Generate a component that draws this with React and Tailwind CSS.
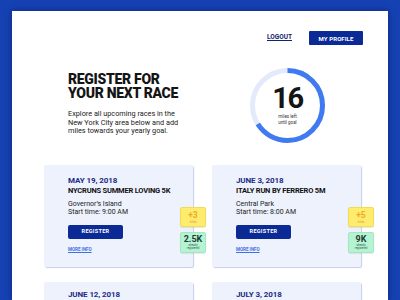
import React from "react";

const races = [
  { date: "MAY 19, 2018", title: "NYCRUNS SUMMER LOVING 5K", place: "Governor’s Island", time: "Start time: 9:00 AM", miles: "+3", reg: "2.5K" },
  { date: "JUNE 3, 2018", title: "ITALY RUN BY FERRERO 5M", place: "Central Park", time: "Start time: 8:00 AM", miles: "+5", reg: "9K" },
  { date: "JUNE 12, 2018", title: "NYRR RACE FOR RECOVERY 4M", place: "Central Park", time: "Start time: 8:00 AM", miles: "+4", reg: "5K" },
  { date: "JULY 3, 2018", title: "FOUR MILE FIREWORKS RUN", place: "Prospect Park", time: "Start time: 7:00 PM", miles: "+4", reg: "3K" },
];

function Card({ r, second }) {
  return (
    <div className={`relative h-[102px] rounded-[2px] bg-[#eef2fd] pl-[24px] shadow-[1px_1px_1px_rgba(160,175,220,0.6)] ${second ? "pt-[8px]" : "pt-[11px]"}`}>
      <div className="text-[8px] leading-[10px] font-bold text-[#1b2a86] tracking-[-0.1px]">{r.date}</div>
      <div className="text-[7.5px] leading-[10px] font-bold text-[#111] tracking-[-0.2px] whitespace-nowrap">{r.title}</div>
      <div className="mt-[3.5px] text-[7px] leading-[8px] text-[#222]">{r.place}</div>
      <div className="text-[7px] leading-[8px] text-[#222]">{r.time}</div>
      <div className="mt-[9px] flex h-[14px] w-[55px] items-center justify-center rounded-[2px] bg-[#0b2a96] text-[5.5px] font-bold tracking-[0.3px] text-white">
        REGISTER
      </div>
      <div className="mt-[8px] text-[4.5px] leading-[6px] font-bold text-[#3d6fe6] underline">MORE INFO</div>
      <div className="absolute left-[136px] top-[42px] flex h-[20px] w-[26px] flex-col items-center justify-center rounded-[2px] border border-[#f3dc4f] bg-[#fdec6e] shadow-[0_1px_1px_rgba(0,0,0,0.08)]">
        <div className="text-[8.5px] leading-[9px] font-bold text-[#f5a623]">{r.miles}</div>
        <div className="text-[3px] leading-[4px] text-[#e5a03a]">miles</div>
      </div>
      <div className="absolute left-[136px] top-[67px] flex h-[21px] w-[26px] flex-col items-center justify-center rounded-[2px] border border-[#9ee9c2] bg-[#b6f3d3] shadow-[0_1px_1px_rgba(0,0,0,0.08)]">
        <div className="text-[9px] leading-[9px] font-bold text-[#1f3d33]">{r.reg}</div>
        <div className="text-[2.8px] leading-[3px] text-[#2f5a4a] text-center">already<br />registered</div>
      </div>
    </div>
  );
}

export default function App() {
  const r = 35;
  const c = 2 * Math.PI * r;
  return (
    <div className="h-[300px] w-[400px] overflow-hidden bg-[#1541b3] pt-[11px]" style={{ fontFamily: "Roboto, 'Liberation Sans', sans-serif" }}>
      <div className="mx-[12px] h-[289px] overflow-hidden bg-white shadow-[0_0_6px_rgba(0,10,60,0.5)]">
        <div className="flex items-center justify-end gap-[17px] pr-[25px] pt-[20px]">
          <div className="text-[6.5px] font-bold text-[#13236e] underline">LOGOUT</div>
          <div className="flex h-[14px] w-[54px] items-center justify-center rounded-[1px] bg-[#0b2a96] text-[6px] font-bold tracking-[0.1px] text-white">
            MY PROFILE
          </div>
        </div>
        <div className="mt-[23px] flex">
          <div className="pl-[56px] pt-[4px]">
            <div className="text-[14px] leading-[14px] font-black tracking-[-0.3px] text-[#151515]">
              <div>REGISTER FOR</div>
              <div>YOUR NEXT RACE</div>
            </div>
            <div className="mt-[10px] w-[125px] text-[7.3px] leading-[8.5px] text-[#222]">
              <div>Explore all upcoming races in the</div>
              <div>New York City area below and add</div>
              <div>miles towards your yearly goal.</div>
            </div>
          </div>
          <div className="relative ml-auto mr-[63px] h-[75px] w-[75px]">
            <svg width="75" height="75" viewBox="0 0 75 75" className="absolute inset-0">
              <circle cx="37.5" cy="37.5" r={r} fill="none" stroke="#e4eafb" strokeWidth="5" />
              <circle
                cx="37.5"
                cy="37.5"
                r={r}
                fill="none"
                stroke="#3f7af0"
                strokeWidth="5"
                strokeDasharray={`${c * 0.66} ${c}`}
                transform="rotate(-90 37.5 37.5)"
              />
            </svg>
            <div className="absolute inset-0 flex flex-col items-center pt-[16px]">
              <div className="text-[29px] leading-[29px] font-bold tracking-[-1.5px] text-[#151515]">16</div>
              <div className="mt-[1px] text-center text-[4.5px] leading-[5.5px] text-[#333]">
                <div>miles left</div>
                <div>until goal</div>
              </div>
            </div>
          </div>
        </div>
        <div className="mt-[22px] grid grid-cols-[149px_149px] gap-x-[19px] gap-y-[15px] pl-[32px]">
          {races.map((x, i) => (
            <Card key={x.date} r={x} second={i >= 2} />
          ))}
        </div>
      </div>
    </div>
  );
}
